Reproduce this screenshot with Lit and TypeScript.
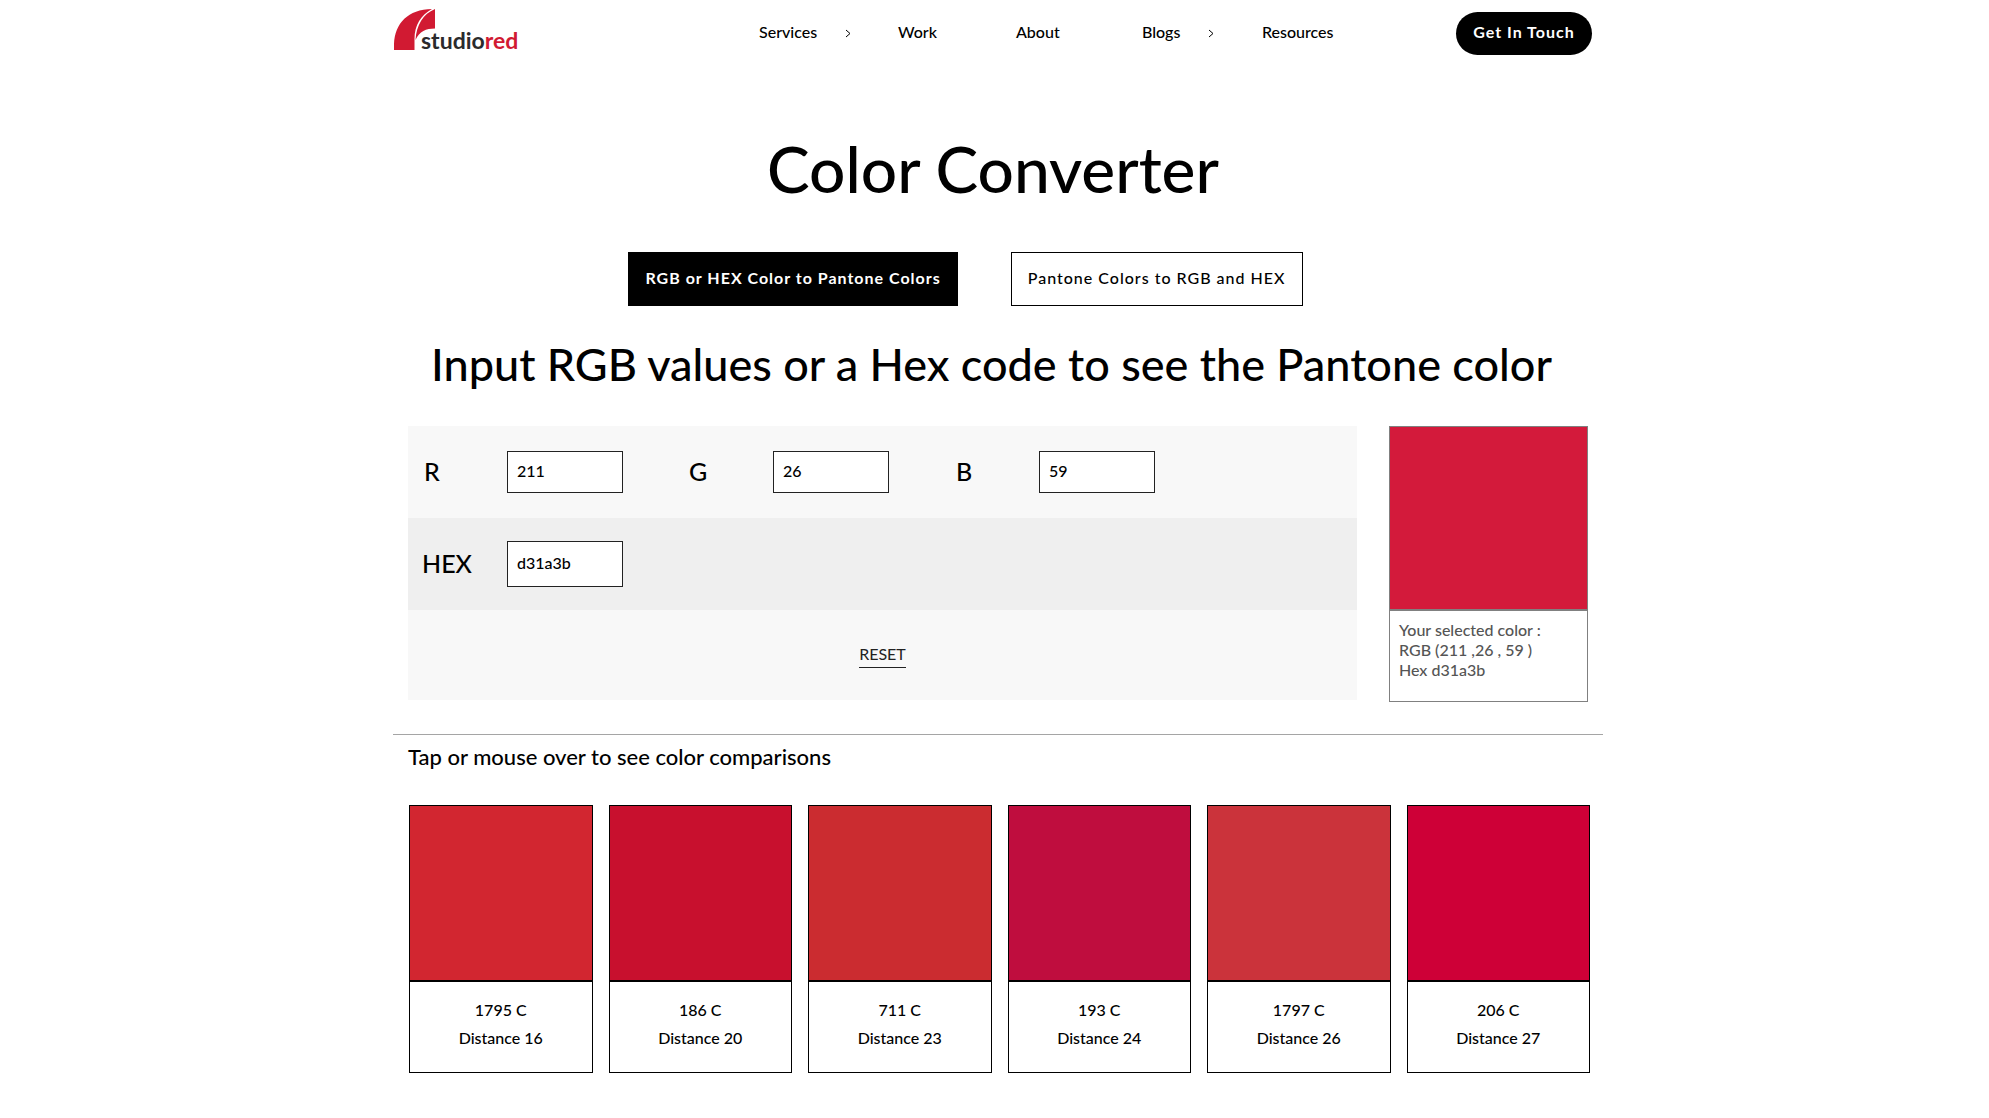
import { LitElement, html, css, svg, nothing } from "lit";
import { customElement, property, state } from "lit/decorators.js";
import { styleMap } from "lit/directives/style-map.js";

interface NavItem {
  label: string;
  submenu: boolean;
}

interface Match {
  name: string;
  distance: number;
  color: string;
}

const NAV: NavItem[] = [
  { label: "Services", submenu: true },
  { label: "Work", submenu: false },
  { label: "About", submenu: false },
  { label: "Blogs", submenu: true },
  { label: "Resources", submenu: false },
];

const MATCHES: Match[] = [
  { name: "1795 C", distance: 16, color: "#d22630" },
  { name: "186 C", distance: 20, color: "#c8102e" },
  { name: "711 C", distance: 23, color: "#cb2c30" },
  { name: "193 C", distance: 24, color: "#bf0d3e" },
  { name: "1797 C", distance: 26, color: "#cb333b" },
  { name: "206 C", distance: 27, color: "#ce0037" },
];

@customElement("site-header")
export class SiteHeader extends LitElement {
  static styles = css`
    :host {
      display: block;
    }
    .bar {
      display: flex;
      align-items: center;
      height: 67px;
      padding-right: 3px;
    }
    .logo {
      display: block;
      width: 127px;
      height: 49px;
    }
    .logo-text {
      font: 700 23px Lato, sans-serif;
    }
    .nav {
      display: grid;
      grid-template-columns: 139px 118px 126px 120px 74px;
      margin-left: auto;
      margin-right: 120px;
      padding-bottom: 3px;
    }
    .item {
      display: flex;
      align-items: center;
      gap: 28px;
    }
    .link {
      color: #000;
      font-size: 16px;
      font-weight: 500;
      line-height: 24px;
      text-decoration: none;
    }
    .chevron {
      width: 6px;
      height: 9px;
      padding-top: 2px;
      fill: none;
      stroke: #000;
    }
    .cta {
      box-sizing: border-box;
      width: 136px;
      height: 43px;
      border-radius: 22px;
      background: #000;
      color: #fff;
      font-size: 16px;
      font-weight: 700;
      letter-spacing: 1px;
      line-height: 40px;
      text-align: center;
      text-decoration: none;
      white-space: nowrap;
    }
  `;

  render() {
    return html`
      <header class="bar">
        <a href="#home" aria-label="studiored">
          <svg class="logo" viewBox="0 0 127 49">
            <path
              fill="#d11a32"
              d="M0 41 V35 C1 14 14 0.5 38 0 C27 6 20.500 16 20.500 30 V41 Z"
            />
            <path
              fill="#d11a32"
              d="M41 0 V19.500 C32 19.500 25.500 22 21.500 31 C22.500 16 29 5 41 0 Z"
            />
            <text class="logo-text" x="27" y="40" fill="#2b2a2c">
              studio<tspan fill="#d11a32">red</tspan>
            </text>
          </svg>
        </a>
        <nav class="nav" aria-label="Main">
          ${NAV.map(
            (item) => html`
              <div class="item">
                <a class="link" href="#${item.label.toLowerCase()}">${item.label}</a>
                ${item.submenu
                  ? html`<svg class="chevron" viewBox="0 0 6 9">
                      ${svg`<path d="M1 1 L5 4.500 L1 8" />`}
                    </svg>`
                  : nothing}
              </div>
            `
          )}
        </nav>
        <a class="cta" href="#contact">Get In Touch</a>
      </header>
    `;
  }
}

@customElement("match-card")
export class MatchCard extends LitElement {
  @property({ attribute: false }) match!: Match;

  static styles = css`
    :host {
      display: block;
    }
    .card {
      border: 1px solid #000;
      text-align: center;
    }
    .swatch {
      height: 174px;
      border-bottom: 2px solid #000;
    }
    .caption {
      padding: 14px 0 20px;
      font-size: 16px;
      font-weight: 500;
      line-height: 28px;
    }
    .line {
      margin: 0;
    }
  `;

  render() {
    return html`
      <article class="card">
        <div class="swatch" style=${styleMap({ background: this.match.color })}></div>
        <div class="caption">
          <p class="line">${this.match.name}</p>
          <p class="line">Distance ${this.match.distance}</p>
        </div>
      </article>
    `;
  }
}

@customElement("app-root")
export class AppRoot extends LitElement {
  @state() private rgb: number[] = [211, 26, 59];
  @state() private hex = "d31a3b";

  static styles = css`
    :host {
      display: block;
      background: #fff;
      color: #000;
      font-family: Lato, "Liberation Sans", sans-serif;
    }
    .page {
      max-width: 1201px;
      margin: 0 auto;
      padding-bottom: 44px;
    }
    .title,
    .subtitle {
      margin: 0;
      font-weight: 500;
      text-align: center;
    }
    .title {
      padding: 62px 3px 0 0;
      font-size: 64px;
      line-height: 80px;
    }
    .subtitle {
      padding: 30px 6px 34px 0;
      font-size: 45px;
      line-height: 56px;
    }
    .tabs {
      display: flex;
      justify-content: center;
      gap: 53px;
      padding: 43px 58px 0 0;
    }
    .tab {
      height: 54px;
      padding: 0 16px 3px;
      border: 1px solid #000;
      background: #fff;
      color: #000;
      font-family: inherit;
      font-size: 16px;
      font-weight: 500;
      letter-spacing: 1px;
    }
    .tab.active {
      background: #000;
      color: #fff;
      font-weight: 700;
    }
    .converter {
      display: flex;
      gap: 32px;
      padding: 0 7px 0 14px;
      align-items: flex-start;
    }
    .form {
      flex: 1;
      background: #f8f8f8;
    }
    .row {
      display: flex;
      align-items: center;
      gap: 51px;
      height: 92px;
    }
    .row.hex {
      gap: 0;
      background: #efefef;
    }
    .row.actions {
      justify-content: center;
      height: 90px;
    }
    .field {
      display: flex;
      align-items: center;
      gap: 51px;
    }
    .label {
      box-sizing: border-box;
      width: 48px;
      padding-bottom: 2px;
      font-size: 25px;
      font-weight: 500;
      line-height: 32px;
      text-align: center;
    }
    .label.wide {
      width: 99px;
      padding-left: 14px;
      text-align: left;
    }
    .input {
      box-sizing: border-box;
      width: 116px;
      height: 42px;
      padding: 0 9px 3px;
      border: 1px solid #222;
      border-radius: 0;
      background: #fff;
      color: #000;
      font-family: inherit;
      font-size: 16px;
      font-weight: 500;
    }
    .input.tall {
      height: 46px;
    }
    .reset {
      padding: 0 0 1px;
      border: 0;
      border-bottom: 1px solid #222;
      background: none;
      color: #222;
      font-family: inherit;
      font-size: 16px;
      line-height: 24px;
    }
    .preview {
      box-sizing: border-box;
      width: 199px;
      border: 1px solid #808080;
    }
    .preview-color {
      height: 182px;
      border-bottom: 2px solid #808080;
    }
    .preview-text {
      margin: 0;
      padding: 9px 9px 21px;
      color: #555;
      font-size: 16px;
      font-weight: 500;
      line-height: 20px;
    }
    .divider {
      margin: 32px -8px 0 -1px;
      border: 0;
      border-top: 1px solid #a5a5a5;
    }
    .hint {
      margin: 0;
      padding: 8px 14px 34px;
      font-size: 22px;
      font-weight: 500;
      line-height: 28px;
    }
    .matches {
      display: grid;
      grid-template-columns: repeat(6, 1fr);
      gap: 16px;
      padding: 0 5px 0 15px;
    }
  `;

  private setChannel(index: number, event: Event) {
    const value = Number((event.target as HTMLInputElement).value) || 0;
    const next = [...this.rgb];
    next[index] = Math.min(255, Math.max(0, value));
    this.rgb = next;
    this.hex = next.map((n) => n.toString(16).padStart(2, "0")).join("");
  }

  private setHex(event: Event) {
    const value = (event.target as HTMLInputElement).value.replace("#", "");
    this.hex = value;
    if (/^[0-9a-f]{6}$/i.test(value)) {
      this.rgb = [0, 2, 4].map((i) => parseInt(value.slice(i, i + 2), 16));
    }
  }

  private reset() {
    this.rgb = [0, 0, 0];
    this.hex = "000000";
  }

  render() {
    const [r, g, b] = this.rgb;
    return html`
      <div class="page">
        <site-header></site-header>
        <main>
          <h1 class="title">Color Converter</h1>
          <div class="tabs">
            <button class="tab active" type="button">RGB or HEX Color to Pantone Colors</button>
            <button class="tab" type="button">Pantone Colors to RGB and HEX</button>
          </div>
          <h2 class="subtitle">Input RGB values or a Hex code to see the Pantone color</h2>
          <section class="converter">
            <div class="form">
              <div class="row">
                ${["R", "G", "B"].map(
                  (name, i) => html`
                    <div class="field">
                      <label class="label" for="channel-${name}">${name}</label>
                      <input
                        class="input"
                        id="channel-${name}"
                        type="text"
                        inputmode="numeric"
                        .value=${String(this.rgb[i])}
                        @input=${(e: Event) => this.setChannel(i, e)}
                      />
                    </div>
                  `
                )}
              </div>
              <div class="row hex">
                <label class="label wide" for="hex">HEX</label>
                <input class="input tall" id="hex" type="text" .value=${this.hex} @input=${this.setHex} />
              </div>
              <div class="row actions">
                <button class="reset" type="button" @click=${this.reset}>RESET</button>
              </div>
            </div>
            <aside class="preview">
              <div
                class="preview-color"
                style=${styleMap({ background: `rgb(${r}, ${g}, ${b})` })}
              ></div>
              <p class="preview-text">
                Your selected color :<br />RGB (${r} ,${g} , ${b} )<br />Hex ${this.hex}
              </p>
            </aside>
          </section>
          <hr class="divider" />
          <p class="hint">Tap or mouse over to see color comparisons</p>
          <section class="matches">
            ${MATCHES.map((m) => html`<match-card .match=${m}></match-card>`)}
          </section>
        </main>
      </div>
    `;
  }
}
